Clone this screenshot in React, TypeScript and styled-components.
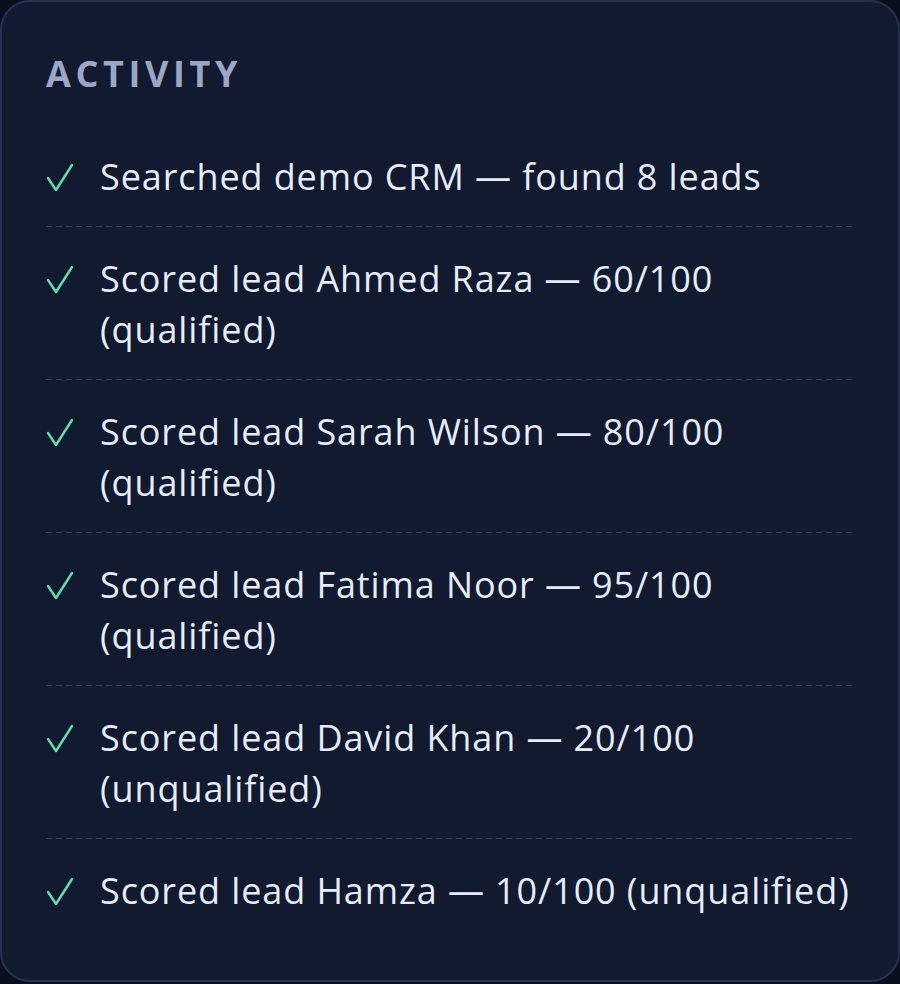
import styled, { createGlobalStyle } from "styled-components";

const GlobalStyle = createGlobalStyle`
  html, body {
    margin: 0;
    padding: 0;
    background: #0a0f1d;
  }
  * {
    box-sizing: border-box;
  }
`;

const Card = styled.section`
  width: 900px;
  height: 982px;
  background: #111a2e;
  border: 2px solid #263150;
  border-radius: 30px;
  padding: 50px 44px 0 44px;
  font-family: "Open Sans", "Noto Sans", sans-serif;
`;

const Title = styled.h2`
  margin: 0 0 29px 0;
  font-size: 36px;
  font-weight: 700;
  letter-spacing: 4.6px;
  line-height: 44px;
  color: #9ca6c6;
`;

const List = styled.ul`
  list-style: none;
  margin: 0;
  padding: 0;
`;

const Item = styled.li<{ $last?: boolean }>`
  display: grid;
  grid-template-columns: 54px 1fr;
  align-items: start;
  padding: 25.5px 0;
  background-image: ${(p) =>
    p.$last
      ? "none"
      : "repeating-linear-gradient(90deg, #34415f 0 6px, transparent 6px 10px)"};
  background-size: 100% 1px;
  background-repeat: no-repeat;
  background-position: bottom left;
`;

const Check = styled.svg`
  width: 28px;
  height: 32px;
  margin-top: 11px;
`;

const Text = styled.span`
  font-size: 36px;
  line-height: 51px;
  letter-spacing: 0.9px;
  color: #e6ecfa;
`;

const entries = [
  "Searched demo CRM — found 8 leads",
  "Scored lead Ahmed Raza — 60/100 (qualified)",
  "Scored lead Sarah Wilson — 80/100 (qualified)",
  "Scored lead Fatima Noor — 95/100 (qualified)",
  "Scored lead David Khan — 20/100 (unqualified)",
  "Scored lead Hamza — 10/100 (unqualified)",
];

function CheckIcon() {
  return (
    <Check viewBox="0 0 28 32">
      <polyline
        points="2,16 10,28 26,3"
        fill="none"
        stroke="#5fe0ac"
        strokeWidth="2.4"
        strokeLinecap="round"
        strokeLinejoin="round"
      />
    </Check>
  );
}

export default function App() {
  return (
    <>
      <GlobalStyle />
      <Card>
        <Title>ACTIVITY</Title>
        <List>
          {entries.map((e, i) => (
            <Item key={i} $last={i === entries.length - 1}>
              <CheckIcon />
              <Text>{e}</Text>
            </Item>
          ))}
        </List>
      </Card>
    </>
  );
}
